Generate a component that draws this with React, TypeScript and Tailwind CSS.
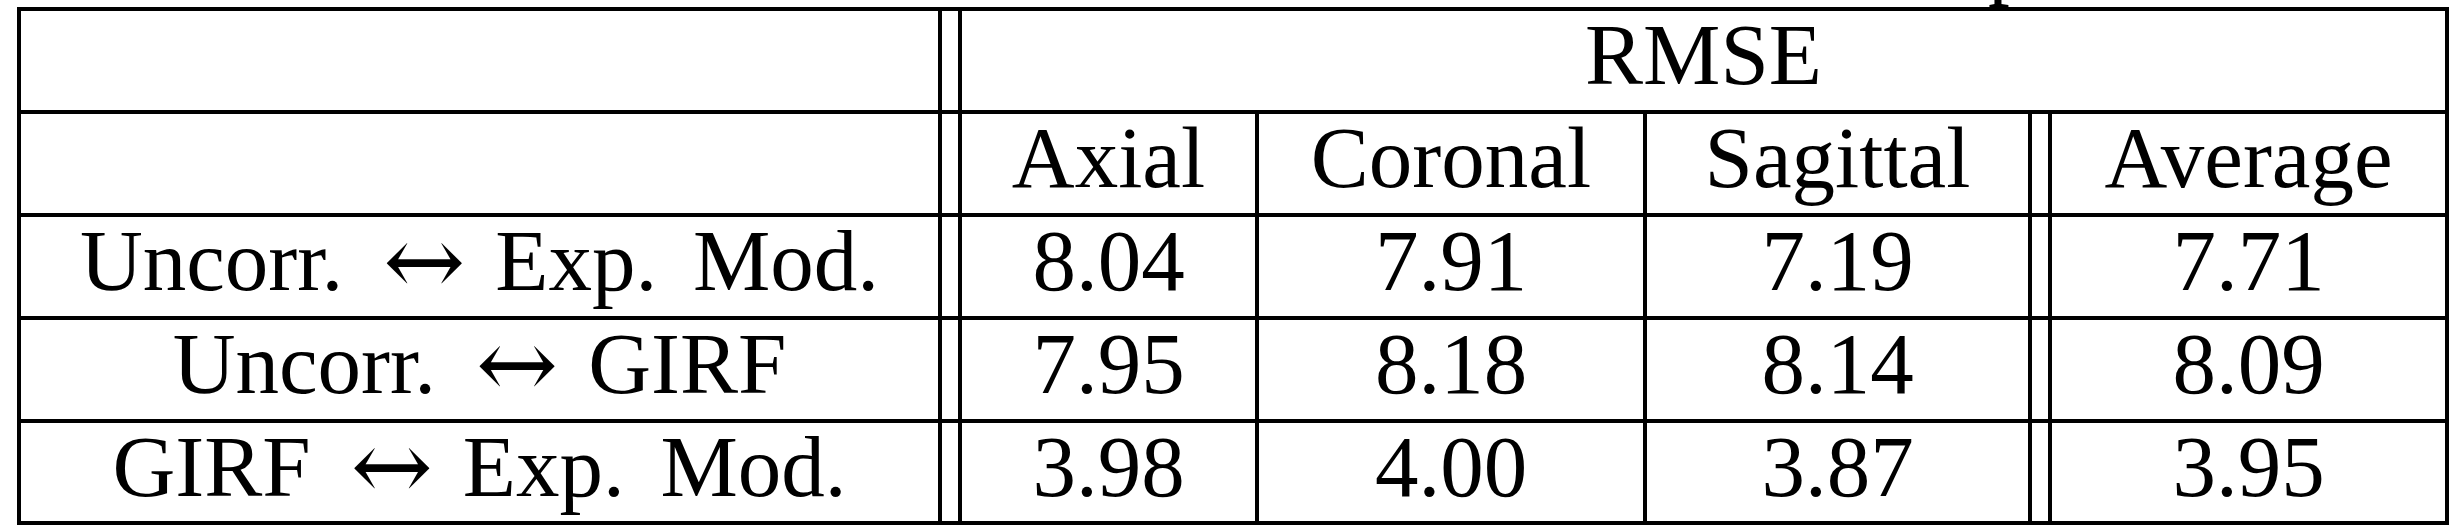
const serif = { fontFamily: '"Liberation Serif", "Times New Roman", serif' };
const arrowFont = { fontFamily: '"DejaVu Serif", "DejaVu Sans", serif' };

const cols = 'grid-cols-[4px_917px_4px_16px_4px_293px_4px_384px_4px_381px_4px_16px_4px_393px_4px]';
const rows = 'grid-rows-[4px_99px_4px_99px_4px_99px_4px_99px_4px_98px_4px]';

const data = [
  { label: ['Uncorr.', 'Exp. Mod.'], vals: ['8.04', '7.91', '7.19', '7.71'] },
  { label: ['Uncorr.', 'GIRF'], vals: ['7.95', '8.18', '8.14', '8.09'] },
  { label: ['GIRF', 'Exp. Mod.'], vals: ['3.98', '4.00', '3.87', '3.95'] },
];

const rowStart = ['row-[6/7]', 'row-[8/9]', 'row-[10/11]'];
const valCols = ['col-[6/7]', 'col-[8/9]', 'col-[10/11]', 'col-[14/15]'];

function Cell({ className, children }: { className: string; children?: React.ReactNode }) {
  return (
    <div className={`${className} flex items-center justify-center pb-[12px] text-[87px] leading-none text-black whitespace-pre`}>
      {children}
    </div>
  );
}

export default function App() {
  return (
    <div className="relative h-[530px] w-[2455px] overflow-hidden bg-white" style={serif}>
      {/* descender of the caption line cut off above the table */}
      <div className="absolute left-[1988px] top-[-85px] text-[87px] leading-none text-black">p</div>

      <div className={`ml-[17px] mt-[7px] grid ${cols} ${rows}`}>
        {/* horizontal rules */}
        <div className="col-[1/16] row-[1/2] bg-black" />
        <div className="col-[1/16] row-[3/4] bg-black" />
        <div className="col-[1/16] row-[5/6] bg-black" />
        <div className="col-[1/16] row-[7/8] bg-black" />
        <div className="col-[1/16] row-[9/10] bg-black" />
        <div className="col-[1/16] row-[11/12] bg-black" />

        {/* vertical rules */}
        <div className="col-[1/2] row-[1/12] bg-black" />
        <div className="col-[3/4] row-[1/12] bg-black" />
        <div className="col-[5/6] row-[1/12] bg-black" />
        <div className="col-[7/8] row-[3/12] bg-black" />
        <div className="col-[9/10] row-[3/12] bg-black" />
        <div className="col-[11/12] row-[3/12] bg-black" />
        <div className="col-[13/14] row-[3/12] bg-black" />
        <div className="col-[15/16] row-[1/12] bg-black" />

        {/* header */}
        <Cell className="col-[6/15] row-[2/3]">RMSE</Cell>
        <Cell className="col-[6/7] row-[4/5]">Axial</Cell>
        <Cell className="col-[8/9] row-[4/5]">Coronal</Cell>
        <Cell className="col-[10/11] row-[4/5]">Sagittal</Cell>
        <Cell className="col-[14/15] row-[4/5]">Average</Cell>

        {/* body */}
        {data.map((r, i) => (
          <div key={i} className="contents">
            <Cell className={`${rowStart[i]} col-[2/3] [word-spacing:14px]`}>
              {r.label[0]}
              <span className="ml-[40px] mr-[30px] text-[98px]" style={arrowFont}>
                ↔
              </span>
              {r.label[1]}
            </Cell>
            {r.vals.map((v, j) => (
              <Cell key={j} className={`${valCols[j]} ${rowStart[i]}`}>
                {v}
              </Cell>
            ))}
          </div>
        ))}
      </div>
    </div>
  );
}
